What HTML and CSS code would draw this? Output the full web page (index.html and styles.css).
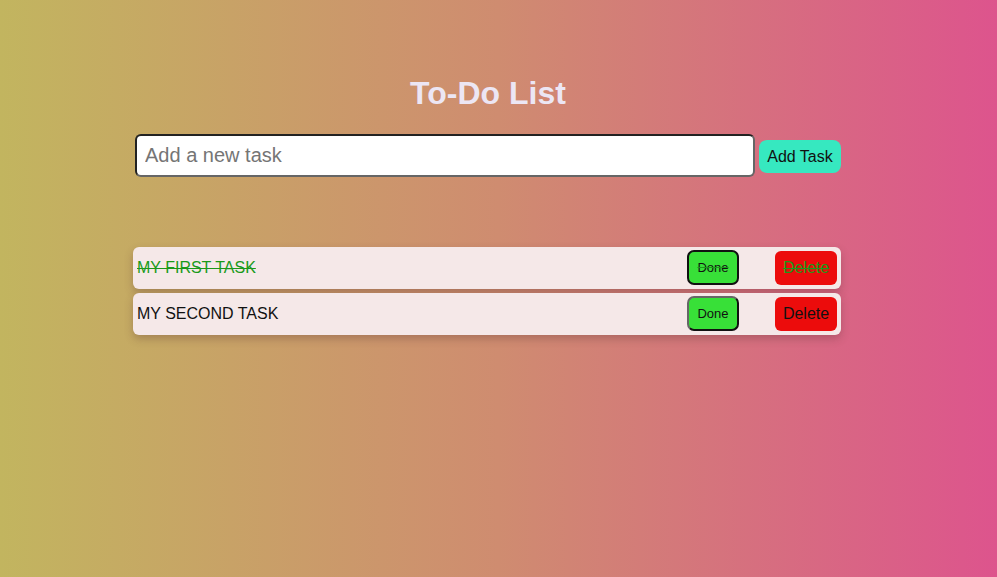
FILE: index.html
```html
<!DOCTYPE html>
<html lang="en">
<head>
<meta charset="utf-8">
<title>To-Do List</title>
<link rel="stylesheet" href="styles.css">
</head>
<body>
<div class="app">
  <h1 class="title">To-Do List</h1>
  <div class="entry">
    <input class="task-input" type="text" placeholder="Add a new task">
    <button class="add-btn">Add Task</button>
  </div>
  <ul class="list">
    <li class="item done">
      <span class="text">MY FIRST TASK</span>
      <button class="done-btn focused">Done</button>
      <button class="del-btn">Delete</button>
    </li>
    <li class="item">
      <span class="text">MY SECOND TASK</span>
      <button class="done-btn">Done</button>
      <button class="del-btn">Delete</button>
    </li>
  </ul>
</div>
</body>
</html>
```
FILE: styles.css
```css
html, body {
  margin: 0;
  height: 100%;
}
body {
  background: linear-gradient(to right, #c2b55f, #cf8c70 50%, #dd548d);
  font-family: "Liberation Sans", Arial, sans-serif;
}
.app {
  width: 708px;
  margin-left: 133px;
  padding-top: 74px;
}
.title {
  margin: 0;
  padding-left: 2px;
  text-align: center;
  font-size: 32px;
  line-height: 38px;
  font-weight: bold;
  color: #ece6f4;
}
.entry {
  display: flex;
  align-items: center;
  gap: 4px;
  margin-top: 22px;
  padding-left: 2px;
}
.task-input {
  width: 620px;
  height: 43px;
  box-sizing: border-box;
  border: 2px solid;
  border-color: #222 #666 #666 #222;
  border-radius: 6px;
  padding: 0 8px;
  font-family: "Liberation Sans", Arial, sans-serif;
  font-size: 20px;
  background: #fff;
  outline: none;
}
.task-input::placeholder {
  color: #757575;
}
.add-btn {
  width: 82px;
  height: 33px;
  margin-top: 2px;
  border: none;
  border-radius: 8px;
  background: #36e8c0;
  color: #111;
  font-family: "Liberation Sans", Arial, sans-serif;
  font-size: 16px;
  padding: 0;
}
.list {
  list-style: none;
  margin: 70px 0 0;
  padding: 0;
  display: flex;
  flex-direction: column;
  gap: 4px;
}
.item {
  display: flex;
  align-items: center;
  height: 42px;
  box-sizing: border-box;
  padding: 0 4px;
  background: #f5e8e8;
  border-radius: 6px;
  box-shadow: 0 4px 8px rgba(90, 50, 50, 0.3);
  font-size: 16px;
  color: #111;
}
.item.done {
  text-decoration: line-through;
  color: #1a9a1a;
}
.item.done .del-btn {
  color: #1a9a1a;
  text-decoration: line-through;
}
.text {
  flex: 1;
}
.done-btn {
  width: 52px;
  height: 35px;
  margin-top: -1px;
  box-sizing: border-box;
  background: #38e038;
  border: 2px solid;
  border-color: #666 #111 #111 #666;
  border-radius: 7px;
  font-family: "Liberation Sans", Arial, sans-serif;
  font-size: 13px;
  color: #111;
  padding: 0;
}
.done-btn.focused {
  border-color: #111;
}
.del-btn {
  width: 62px;
  height: 34px;
  margin-left: 36px;
  background: #ec0c0c;
  border: none;
  border-radius: 6px;
  font-family: "Liberation Sans", Arial, sans-serif;
  font-size: 16px;
  color: #111;
  padding: 0;
}
```
